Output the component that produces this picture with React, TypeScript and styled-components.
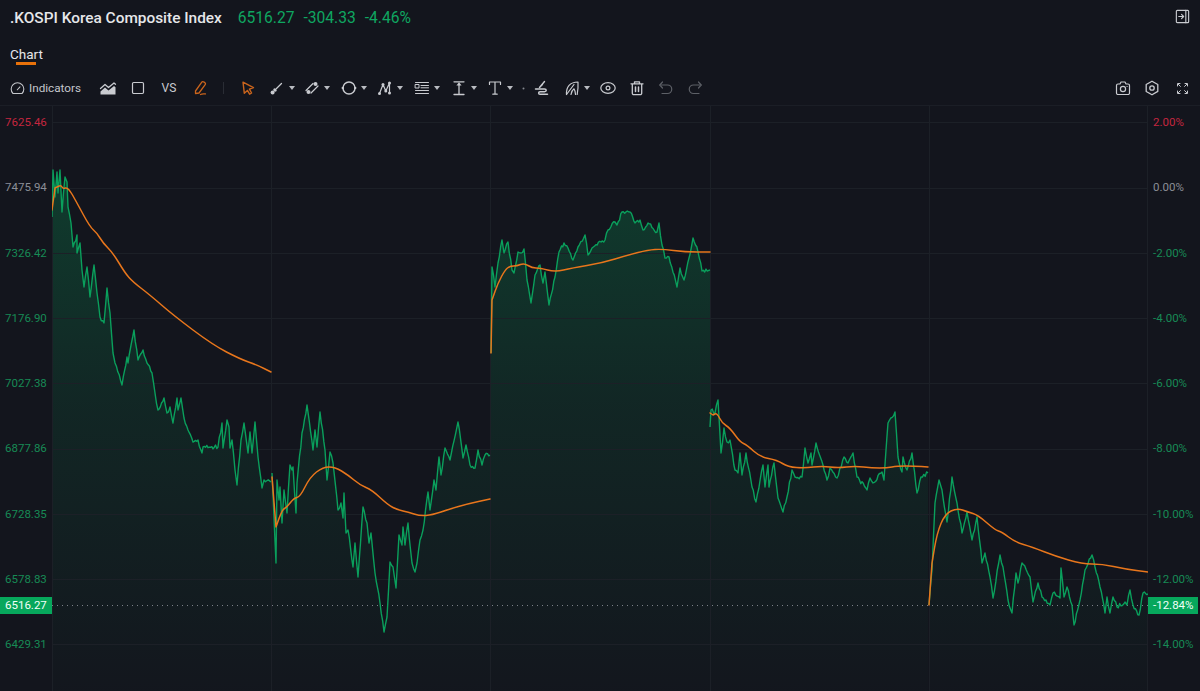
import React, { useMemo } from "react";
import styled, { createGlobalStyle } from "styled-components";

const Global = createGlobalStyle`
  html, body { margin: 0; padding: 0; background: #13151d; }
  * { box-sizing: border-box; }
`;

const Page = styled.div`
  width: 1200px;
  height: 691px;
  overflow: hidden;
  background: #13151d;
  color: #e6e7ea;
  font-family: Roboto, "Liberation Sans", sans-serif;
  display: flex;
  flex-direction: column;
`;

const Header = styled.header`
  height: 35px;
  padding: 0 7px 0 10px;
  display: flex;
  align-items: center;
`;

const Title = styled.h1`
  margin: 0 16px 0 0;
  font-size: 15.4px;
  font-weight: 500;
  color: #e6e7ea;
`;

const Quote = styled.span`
  margin-right: 9px;
  font-size: 15.6px;
  color: #0fa661;
`;

const Tabs = styled.nav`
  height: 35px;
  padding-left: 10px;
  display: flex;
`;

const Tab = styled.div`
  position: relative;
  height: 35px;
  padding-top: 11px;
  font-size: 13.5px;
  line-height: 16px;
  color: #e6e7ea;
  &::after {
    content: "";
    position: absolute;
    left: 6px;
    top: 27px;
    width: 20px;
    height: 3px;
    background: #e8710a;
  }
`;

const Toolbar = styled.div`
  height: 36px;
  padding: 1px 7px 0 10px;
  display: flex;
  align-items: center;
  border-bottom: 1px solid #1b1e26;
  color: #c9cbd0;
`;

const Indicators = styled.div`
  width: 84px;
  display: flex;
  align-items: center;
  gap: 4px;
  font-size: 11.7px;
  color: #c4c6cb;
`;

const Slot = styled.div<{ $w: number; $ml?: number; $dim?: boolean; $accent?: boolean; $lift?: number }>`
  width: ${(p) => p.$w}px;
  margin-left: ${(p) => p.$ml ?? 0}px;
  margin-bottom: ${(p) => p.$lift ?? 0}px;
  height: 24px;
  display: flex;
  align-items: center;
  justify-content: center;
  font-size: 12px;
  color: ${(p) => (p.$accent ? "#c9641c" : p.$dim ? "#5d6067" : "#c9cbd0")};
`;

const Divider = styled.div`
  width: 1px;
  height: 12px;
  margin-left: 9px;
  background: #2a2d35;
`;

const Spring = styled.div`
  flex: 1;
`;

const ChartArea = styled.main`
  position: relative;
  flex: 1;
  display: grid;
  grid-template-columns: 52px 1096px 52px;
  min-height: 0;
`;

const Axis = styled.div`
  display: flex;
  flex-direction: column;
  gap: 49.25px;
  padding-top: 8px;
  padding-left: 5px;
  font-size: 11.5px;
`;

const AxisLabel = styled.div<{ $tone: "up" | "flat" | "down" }>`
  height: 16px;
  line-height: 16px;
  white-space: nowrap;
  color: ${(p) => (p.$tone === "up" ? "#c4263f" : p.$tone === "flat" ? "#8b8e96" : "#178a55")};
`;

const PriceTag = styled.div<{ $side: "left" | "right" }>`
  position: absolute;
  top: 491px;
  ${(p) => (p.$side === "left" ? "left: 0; width: 52px;" : "left: 1148px; width: 50px;")}
  height: 17px;
  padding-left: 5px;
  line-height: 17px;
  font-size: 11.5px;
  color: #f2fff8;
  background: #07a75c;
`;

const Plot = styled.svg`
  display: block;
  width: 1096px;
  height: 585px;
`;

type P = [number, number];

const GREEN: P[][] = [
  [[52,217],[53,170],[55,197],[57,172],[58,193],[60,170],[62,212],[65,177],[67,182],[68,207],[71,223],[73,247],[77,235],[77,253],[80,243],[82,270],[84,287],[87,267],[90,297],[94,265],[97,293],[100,317],[104,323],[107,288],[110,313],[113,353],[115,363],[122,385],[127,357],[128,363],[134,330],[138,360],[143,350],[147,363],[152,373],[155,393],[158,410],[164,398],[167,413],[170,407],[173,423],[177,398],[178,410],[181,398],[184,418],[188,430],[193,442],[198,440],[202,453],[203,447],[218,447],[222,423],[223,448],[227,420],[229,427],[230,448],[232,440],[235,470],[237,485],[241,440],[244,423],[248,453],[250,432],[252,453],[255,422],[258,457],[262,488],[264,480],[271,482]],
  [[272,473],[276,563],[277,480],[279,500],[280,487],[282,523],[284,490],[287,513],[290,465],[292,470],[293,467],[296,513],[297,483],[302,433],[307,405],[313,450],[315,430],[317,447],[320,412],[325,450],[327,480],[330,452],[333,463],[338,510],[341,503],[343,518],[344,493],[346,533],[348,530],[353,567],[355,543],[358,577],[363,507],[367,523],[369,543],[371,533],[375,573],[380,603],[384,632],[387,617],[390,562],[393,567],[396,588],[399,535],[402,545],[403,527],[405,545],[408,523],[412,563],[415,572],[417,563],[420,540],[423,530],[428,492],[430,510],[434,480],[436,490],[439,457],[441,475],[445,448],[450,460],[458,422],[463,458],[466,445],[470,465],[475,468],[478,450],[482,465],[485,455],[490,455]],
  [[491,353],[492,267],[495,287],[498,263],[502,240],[504,253],[508,242],[512,270],[514,273],[518,252],[521,253],[524,249],[527,280],[531,303],[535,275],[540,265],[543,283],[545,272],[549,305],[555,277],[559,252],[564,243],[568,248],[573,260],[578,247],[585,235],[588,255],[592,248],[605,240],[608,230],[615,222],[617,225],[622,212],[630,212],[635,223],[640,220],[643,230],[648,223],[657,232],[659,223],[662,245],[665,258],[669,257],[677,287],[680,268],[684,280],[689,258],[693,238],[698,252],[702,271],[710,270]],
  [[710,427],[711,410],[715,413],[718,400],[721,453],[724,428],[727,442],[730,440],[735,470],[738,473],[740,453],[742,475],[746,453],[752,487],[756,502],[763,465],[765,487],[768,465],[769,487],[774,463],[778,498],[783,512],[787,497],[792,470],[795,477],[802,477],[805,448],[808,463],[811,453],[812,465],[816,443],[823,465],[827,480],[830,468],[837,478],[844,457],[848,463],[853,453],[857,477],[867,490],[870,478],[873,483],[882,472],[884,480],[888,423],[895,412],[898,457],[902,472],[903,457],[907,470],[912,453],[917,493],[921,477],[928,473]],
  [[929,605],[932,570],[935,503],[939,480],[942,490],[947,522],[952,477],[957,503],[962,533],[967,512],[972,540],[977,517],[982,563],[985,553],[990,577],[993,598],[1000,555],[1003,567],[1008,600],[1012,613],[1016,573],[1018,583],[1022,563],[1030,577],[1033,602],[1038,583],[1042,597],[1050,605],[1053,593],[1060,598],[1061,568],[1064,597],[1067,587],[1072,605],[1074,625],[1080,600],[1085,570],[1092,555],[1095,567],[1100,587],[1105,613],[1107,597],[1110,613],[1113,597],[1117,607],[1125,602],[1127,605],[1130,590],[1133,605],[1139,615],[1143,593],[1148,594]],
];

const ORANGE: P[][] = [
  [[52,210],[55,188],[61,185],[63,189],[68,187],[77,203],[90,227],[97,233],[103,243],[113,253],[125,273],[133,282],[150,295],[173,315],[213,345],[240,359],[257,365],[271,372]],
  [[272,477],[276,527],[282,510],[287,507],[294,498],[300,497],[310,477],[323,467],[335,467],[348,475],[360,485],[372,490],[388,505],[398,510],[408,512],[420,516],[432,515],[450,509],[467,504],[490,499]],
  [[491,353],[492,300],[498,283],[505,270],[510,266],[517,266],[524,263],[532,268],[540,268],[555,272],[572,268],[602,263],[628,255],[648,250],[662,249],[685,252],[710,252]],
  [[710,413],[713,415],[717,413],[722,423],[730,428],[740,442],[747,445],[760,457],[777,460],[788,467],[805,468],[822,466],[838,468],[855,466],[872,468],[887,468],[897,466],[915,466],[928,467]],
  [[929,605],[932,563],[937,533],[945,514],[957,508],[968,512],[978,515],[995,530],[1002,532],[1015,542],[1032,547],[1055,556],[1082,564],[1102,564],[1125,569],[1148,572]],
];

function roughen(points: P[], seed: number): P[] {
  let s = seed;
  const rnd = () => {
    s = (s * 16807) % 2147483647;
    return s / 2147483647 - 0.5;
  };
  const out: P[] = [];
  points.forEach((p, i) => {
    out.push(p);
    const next = points[i + 1];
    if (!next) return;
    const steps = Math.floor((next[0] - p[0]) / 1.2);
    for (let k = 1; k < steps; k++) {
      const t = k / steps;
      out.push([p[0] + (next[0] - p[0]) * t, p[1] + (next[1] - p[1]) * t + rnd() * 4]);
    }
  });
  return out;
}

const toPath = (pts: P[]) => pts.map((p, i) => `${i ? "L" : "M"}${p[0].toFixed(1)} ${p[1].toFixed(1)}`).join("");

// Rounds the corners of the moving-average line with quadratic segments through midpoints.
const toSmooth = (pts: P[]) => {
  let d = `M${pts[0][0]} ${pts[0][1]}L${pts[1][0]} ${pts[1][1]}`;
  for (let i = 1; i < pts.length - 1; i++) {
    const mx = (pts[i][0] + pts[i + 1][0]) / 2;
    const my = (pts[i][1] + pts[i + 1][1]) / 2;
    d += `Q${pts[i][0]} ${pts[i][1]} ${mx} ${my}`;
  }
  const last = pts[pts.length - 1];
  return `${d}L${last[0]} ${last[1]}`;
};

const HLINES = [122, 188, 253, 318, 383, 449, 514, 579, 644];
const VLINES = [52.5, 271.5, 490.5, 710.5, 929.5, 1147.5];

const LEFT: { t: string; tone: "up" | "flat" | "down" }[] = [
  { t: "7625.46", tone: "up" }, { t: "7475.94", tone: "flat" }, { t: "7326.42", tone: "down" },
  { t: "7176.90", tone: "down" }, { t: "7027.38", tone: "down" }, { t: "6877.86", tone: "down" },
  { t: "6728.35", tone: "down" }, { t: "6578.83", tone: "down" }, { t: "6429.31", tone: "down" },
];
const RIGHT: { t: string; tone: "up" | "flat" | "down" }[] = [
  { t: "2.00%", tone: "up" }, { t: "0.00%", tone: "flat" }, { t: "-2.00%", tone: "down" },
  { t: "-4.00%", tone: "down" }, { t: "-6.00%", tone: "down" }, { t: "-8.00%", tone: "down" },
  { t: "-10.00%", tone: "down" }, { t: "-12.00%", tone: "down" }, { t: "-14.00%", tone: "down" },
];

const Ico: React.FC<{ s?: number; children: React.ReactNode }> = ({ s = 18, children }) => (
  <svg width={s} height={s} viewBox="0 0 18 18" fill="none" stroke="currentColor" strokeWidth={1.2} strokeLinecap="round" strokeLinejoin="round">
    {children}
  </svg>
);

const Caret = () => (
  <Slot $w={8}>
    <svg width="6" height="4" viewBox="0 0 6 4"><path d="M0 0h6L3 4z" fill="#b9bbc1" /></svg>
  </Slot>
);

const Chart: React.FC = () => {
  const green = useMemo(() => GREEN.map((g, i) => roughen(g, 1234 + i * 977)), []);
  return (
    <Plot viewBox="52 106 1096 585">
      <defs>
        <linearGradient id="fade" gradientUnits="userSpaceOnUse" x1="0" y1="170" x2="0" y2="691">
          <stop offset="0" stopColor="#07a75c" stopOpacity="0.27" />
          <stop offset="0.45" stopColor="#07a75c" stopOpacity="0.12" />
          <stop offset="1" stopColor="#07a75c" stopOpacity="0.01" />
        </linearGradient>
      </defs>
      {green.map((g, i) => (
        <path key={i} d={`${toPath(g)}L${g[g.length - 1][0]} 691L${g[0][0]} 691Z`} fill="url(#fade)" />
      ))}
      {HLINES.map((y) => (
        <line key={y} x1="52" x2="1148" y1={y + 0.5} y2={y + 0.5} stroke="#1c2027" strokeWidth="1" />
      ))}
      {VLINES.map((x) => (
        <line key={x} x1={x} x2={x} y1="106" y2="691" stroke="#1c2027" strokeWidth="1" />
      ))}
      <line x1="52" x2="1148" y1="605.5" y2="605.5" stroke="#7b8087" strokeWidth="1" strokeDasharray="1 4" />
      {green.map((g, i) => (
        <path key={i} d={toPath(g)} fill="none" stroke="#0a9f5c" strokeWidth="1.4" strokeLinejoin="round" />
      ))}
      {ORANGE.map((o, i) => (
        <path key={i} d={toSmooth(o)} fill="none" stroke="#e8761c" strokeWidth="1.5" strokeLinejoin="round" strokeLinecap="round" />
      ))}
    </Plot>
  );
};

export default function App() {
  return (
    <Page>
      <Global />
      <Header>
        <Title>.KOSPI Korea Composite Index</Title>
        <Quote>6516.27</Quote>
        <Quote>-304.33</Quote>
        <Quote>-4.46%</Quote>
        <Spring />
        <Slot $w={22} $lift={3}>
          <Ico s={17}>
            <rect x="2.5" y="2.5" width="13" height="13" rx="1" />
            <path d="M12.5 2.5v13" />
            <path d="M5 9h5M8 6.8 10.2 9 8 11.2" />
          </Ico>
        </Slot>
      </Header>
      <Tabs>
        <Tab>Chart</Tab>
      </Tabs>
      <Toolbar>
        <Indicators>
          <Ico s={15}>
            <path d="M3.6 15a7.6 7.6 0 1 1 10.8 0z" strokeWidth={1.3} />
            <path d="M8.8 10.5 12 7" strokeWidth={1.3} />
          </Ico>
          Indicators
        </Indicators>
        <Slot $w={28}>
          <Ico>
            <path d="M1.5 9.5 6 5.5l3.5 3L15 4l1.5 1.2" strokeWidth={1.3} />
            <path d="M1.5 15.5v-3L6 8.5l3.5 3 5.5-4.5 1.5 1.2v7.3z" fill="currentColor" stroke="none" />
          </Ico>
        </Slot>
        <Slot $w={28} $ml={2}>
          <Ico><rect x="3.5" y="3.5" width="11" height="11" rx="1.2" /></Ico>
        </Slot>
        <Slot $w={28} $ml={3}>VS</Slot>
        <Slot $w={28} $ml={3} $accent>
          <Ico>
            <path d="M4.5 12 10.800 3.200a1.400 1.400 0 0 1 2 -.3l1.100.8a1.400 1.400 0 0 1 .3 2L8 14l-3.500.5z" strokeWidth={1.3} />
            <path d="M9.500 15.500c1.500-1 3-.6 5-.6" strokeWidth={1.3} />
          </Ico>
        </Slot>
        <Divider />
        <Slot $w={28} $ml={10} $accent>
          <Ico>
            <path d="M4 3.2 14.5 8.6 10.4 10.2 12.6 14 10.6 15.2 8.4 11.4 5.3 14.2z" strokeWidth={1.4} />
          </Ico>
        </Slot>
        <Slot $w={22} $ml={4}>
          <Ico>
            <path d="M5 13 13.500 4.500" strokeWidth={1.3} />
            <circle cx="4.600" cy="13.400" r="2" fill="currentColor" stroke="none" />
            <path d="M6.500 10.500 7.500 11.500" strokeWidth={2.4} />
          </Ico>
        </Slot>
        <Caret />
        <Slot $w={22} $ml={5}>
          <Ico>
            <path d="M3 11.500 10 4.500M8 14 15 7" strokeWidth={1.2} />
            <circle cx="5.500" cy="13" r="2" fill="currentColor" stroke="none" />
            <circle cx="12.500" cy="5" r="2" fill="currentColor" stroke="none" />
          </Ico>
        </Slot>
        <Caret />
        <Slot $w={22} $ml={7}>
          <Ico>
            <circle cx="9" cy="9" r="6" strokeWidth={1.4} />
            <circle cx="2.800" cy="9" r="1.200" fill="currentColor" stroke="none" />
            <circle cx="15.200" cy="9" r="1.200" fill="currentColor" stroke="none" />
          </Ico>
        </Slot>
        <Caret />
        <Slot $w={22} $ml={6}>
          <Ico>
            <path d="M3.500 14.500 7 5.500l2.800 6.500L13.500 4M13.500 4v10" strokeWidth={1.2} />
            <circle cx="3.500" cy="14.500" r="1.500" fill="currentColor" stroke="none" />
            <circle cx="7" cy="5.500" r="1.500" fill="currentColor" stroke="none" />
            <circle cx="9.800" cy="12" r="1.500" fill="currentColor" stroke="none" />
            <circle cx="13.500" cy="4" r="1.500" fill="currentColor" stroke="none" />
            <circle cx="13.500" cy="14" r="1.500" fill="currentColor" stroke="none" />
          </Ico>
        </Slot>
        <Caret />
        <Slot $w={22} $ml={7}>
          <Ico>
            <path d="M2.500 3.500h13M8 6.500h7.500M8 8.800h7.500M2.500 11.500h13M2.500 14.500h13" strokeWidth={1} />
            <path d="M2.500 5.500h3.500v3.500H2.500z" strokeWidth={1} />
          </Ico>
        </Slot>
        <Caret />
        <Slot $w={22} $ml={7}>
          <Ico>
            <path d="M4 2.800h10M4 15.500h10M9 6v9.500" strokeWidth={1.3} />
            <path d="M9 3.200 11.600 6.600H6.400z" fill="currentColor" stroke="none" />
          </Ico>
        </Slot>
        <Caret />
        <Slot $w={22} $ml={6}>
          <Ico>
            <path d="M3.500 5.500V3h11v2.500M9 3v12.200M6.800 15.200h4.400" strokeWidth={1.2} />
          </Ico>
        </Slot>
        <Caret />
        <Slot $w={6} $ml={6}>
          <svg width="3" height="3" viewBox="0 0 3 3"><circle cx="1.500" cy="1.500" r="1" fill="#85878e" /></svg>
        </Slot>
        <Slot $w={22} $ml={5}>
          <Ico>
            <path d="M11.500 2.500 6.500 8.500 9.500 5.500" strokeWidth={1.4} />
            <path d="M2.500 10h9c2.300 0 2.300 2.700 0 2.700H7c-1.800 0-1.800 2.600 0 2.600h7.500" strokeWidth={1.5} />
          </Ico>
        </Slot>
        <Slot $w={22} $ml={8}>
          <Ico>
            <path d="M3.500 15.500C3 8 7 3 15 3c.3 4.500-.2 9-.8 12.500" />
            <path d="M3.500 15.500 11 5.500" />
            <path d="M8 15.500c.5-3 2-5 3-5.700 1 1.600 1.500 3.500 1.500 5.700" />
          </Ico>
        </Slot>
        <Caret />
        <Slot $w={22} $ml={6}>
          <Ico>
            <ellipse cx="9" cy="9" rx="7.200" ry="5.400" />
            <circle cx="9" cy="9" r="1.900" />
          </Ico>
        </Slot>
        <Slot $w={22} $ml={7}>
          <Ico>
            <path d="M3 4.800h12M6.500 4.500V2.800h5v1.700M4.300 4.800v9.400a1.500 1.500 0 0 0 1.500 1.500h6.400a1.500 1.500 0 0 0 1.500-1.500V4.800" strokeWidth={1.3} />
            <path d="M7.500 8v4.500M10.500 8v4.500" strokeWidth={1.5} />
          </Ico>
        </Slot>
        <Slot $w={22} $ml={7} $dim>
          <Ico>
            <path d="M5.500 3 2.800 6l2.700 3" />
            <path d="M3 6h7.500a4 4 0 0 1 0 8.500H5" />
          </Ico>
        </Slot>
        <Slot $w={22} $ml={7} $dim>
          <Ico>
            <path d="M12.500 3l2.700 3-2.700 3" />
            <path d="M15 6H7.500a4 4 0 0 0 0 8.500H13" />
          </Ico>
        </Slot>
        <Spring />
        <Slot $w={22}>
          <Ico>
            <path d="M2.500 6.500a1.500 1.500 0 0 1 1.500-1.500h2l1-2h4l1 2h2a1.500 1.500 0 0 1 1.500 1.500v7.500a1.500 1.500 0 0 1-1.500 1.500H4a1.500 1.500 0 0 1-1.500-1.500z" />
            <circle cx="9" cy="10" r="2.600" />
            <path d="M13 7.500h.1" />
          </Ico>
        </Slot>
        <Slot $w={22} $ml={7}>
          <Ico>
            <path d="M9 2.200 14.800 5.500v6.900L9 15.800 3.200 12.500V5.500z" strokeWidth={1.3} />
            <circle cx="9" cy="9" r="2.200" strokeWidth={1.3} />
          </Ico>
        </Slot>
        <Slot $w={22} $ml={8}>
          <Ico s={15}>
            <path d="M3 6V3h3M12 3h3v3M15 12v3h-3M6 15H3v-3" strokeWidth={1.2} />
            <path d="M4 4l2.500 2.500M14 4l-2.500 2.500M14 14l-2.500-2.500M4 14l2.500-2.500" strokeWidth={1.2} />
          </Ico>
        </Slot>
      </Toolbar>
      <ChartArea>
        <Axis>
          {LEFT.map((l) => <AxisLabel key={l.t} $tone={l.tone}>{l.t}</AxisLabel>)}
        </Axis>
        <Chart />
        <Axis>
          {RIGHT.map((l) => <AxisLabel key={l.t} $tone={l.tone}>{l.t}</AxisLabel>)}
        </Axis>
        <PriceTag $side="left">6516.27</PriceTag>
        <PriceTag $side="right">-12.84%</PriceTag>
      </ChartArea>
    </Page>
  );
}
